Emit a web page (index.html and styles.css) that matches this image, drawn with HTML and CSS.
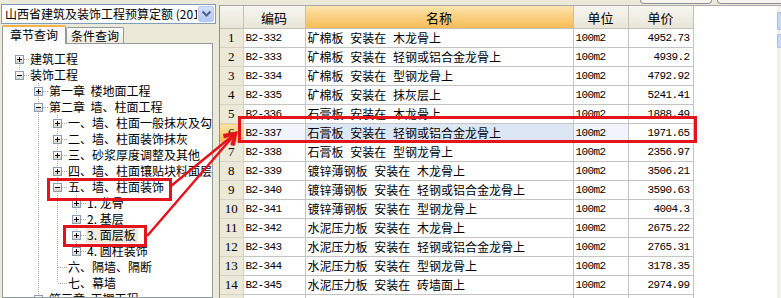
FILE: index.html
```html
<!DOCTYPE html>
<html lang="zh-CN">
<head>
    <meta charset="UTF-8">
    <title>定额查询</title>
    <link rel="stylesheet" href="styles.css">
</head>
<body>
    <div class="app">
        <div class="left">
            <div class="combo">
                <span class="combo-text">山西省建筑及装饰工程预算定额 (2011)</span>
                <span class="combo-btn">
                    <svg width="11" height="8" viewBox="0 0 11 8"><path d="M1.5 1.5 L5.5 5.5 L9.5 1.5" fill="none" stroke="#4d6185" stroke-width="2"/></svg>
                </span>
            </div>
            <div class="tabs">
                <div class="tab active">章节查询</div>
                <div class="tab">条件查询</div>
            </div>
            <div class="tree">
                <div class="row"><i class="c first"><b class="box plus"></b><s></s></i><span class="t">建筑工程</span></div>
                <div class="row"><i class="c last"><b class="box minus"></b><s></s></i><span class="t">装饰工程</span></div>
                <div class="row"><i class="g"></i><i class="c mid"><b class="box plus"></b><s></s></i><span class="t">第一章  楼地面工程</span></div>
                <div class="row"><i class="g"></i><i class="c mid"><b class="box minus"></b><s></s></i><span class="t">第二章  墙、柱面工程</span></div>
                <div class="row"><i class="g"></i><i class="g v"></i><i class="c mid"><b class="box plus"></b><s></s></i><span class="t">一、墙、柱面一般抹灰及勾缝</span></div>
                <div class="row"><i class="g"></i><i class="g v"></i><i class="c mid"><b class="box plus"></b><s></s></i><span class="t">二、墙、柱面装饰抹灰</span></div>
                <div class="row"><i class="g"></i><i class="g v"></i><i class="c mid"><b class="box plus"></b><s></s></i><span class="t">三、砂浆厚度调整及其他</span></div>
                <div class="row"><i class="g"></i><i class="g v"></i><i class="c mid"><b class="box plus"></b><s></s></i><span class="t">四、墙、柱面镶贴块料面层</span></div>
                <div class="row"><i class="g"></i><i class="g v"></i><i class="c mid"><b class="box minus"></b><s></s></i><span class="t">五、墙、柱面装饰</span></div>
                <div class="row"><i class="g"></i><i class="g v"></i><i class="g v"></i><i class="c mid"><b class="box plus"></b><s></s></i><span class="t">1. 龙骨</span></div>
                <div class="row"><i class="g"></i><i class="g v"></i><i class="g v"></i><i class="c mid"><b class="box plus"></b><s></s></i><span class="t">2. 基层</span></div>
                <div class="row"><i class="g"></i><i class="g v"></i><i class="g v"></i><i class="c mid"><b class="box plus"></b><s></s></i><span class="t selected">3. 面层板</span></div>
                <div class="row"><i class="g"></i><i class="g v"></i><i class="g v"></i><i class="c last"><b class="box plus"></b><s></s></i><span class="t">4. 圆柱装饰</span></div>
                <div class="row"><i class="g"></i><i class="g v"></i><i class="c mid nobox"><s></s></i><span class="t">六、隔墙、隔断</span></div>
                <div class="row"><i class="g"></i><i class="g v"></i><i class="c last nobox"><s></s></i><span class="t">七、幕墙</span></div>
                <div class="row"><i class="g"></i><i class="c mid"><b class="box plus"></b><s></s></i><span class="t">第三章  天棚工程</span></div>
            </div>
        </div>

        <div class="main">
            <div class="topbar">
                <span class="tool-btn"></span>
                <span class="tool-btn wide"></span>
            </div>
            <div class="gridbox">
                <div class="grid-area">
                    <table class="grid">
                        <colgroup>
                            <col class="w-num"><col class="w-code"><col class="w-name"><col class="w-unit"><col class="w-price">
                        </colgroup>
                        <thead>
                            <tr><th></th><th>编码</th><th class="sorted">名称</th><th>单位</th><th>单价</th></tr>
                        </thead>
                        <tbody>
                            <tr><td class="num">1</td><td class="code">B2-332</td><td class="name">矿棉板 安装在 木龙骨上</td><td class="code">100m2</td><td class="price">4952.73</td></tr>
                            <tr><td class="num">2</td><td class="code">B2-333</td><td class="name">矿棉板 安装在 轻钢或铝合金龙骨上</td><td class="code">100m2</td><td class="price">4939.2</td></tr>
                            <tr><td class="num">3</td><td class="code">B2-334</td><td class="name">矿棉板 安装在 型钢龙骨上</td><td class="code">100m2</td><td class="price">4792.92</td></tr>
                            <tr><td class="num">4</td><td class="code">B2-335</td><td class="name">矿棉板 安装在 抹灰层上</td><td class="code">100m2</td><td class="price">5241.41</td></tr>
                            <tr><td class="num">5</td><td class="code">B2-336</td><td class="name">石膏板 安装在 木龙骨上</td><td class="code">100m2</td><td class="price">1888.49</td></tr>
                            <tr class="current"><td class="num">6</td><td class="code">B2-337</td><td class="name">石膏板 安装在 轻钢或铝合金龙骨上</td><td class="code">100m2</td><td class="price">1971.65</td></tr>
                            <tr><td class="num">7</td><td class="code">B2-338</td><td class="name">石膏板 安装在 型钢龙骨上</td><td class="code">100m2</td><td class="price">2356.97</td></tr>
                            <tr><td class="num">8</td><td class="code">B2-339</td><td class="name">镀锌薄钢板 安装在 木龙骨上</td><td class="code">100m2</td><td class="price">3506.21</td></tr>
                            <tr><td class="num">9</td><td class="code">B2-340</td><td class="name">镀锌薄钢板 安装在 轻钢或铝合金龙骨上</td><td class="code">100m2</td><td class="price">3590.63</td></tr>
                            <tr><td class="num">10</td><td class="code">B2-341</td><td class="name">镀锌薄钢板 安装在 型钢龙骨上</td><td class="code">100m2</td><td class="price">4004.3</td></tr>
                            <tr><td class="num">11</td><td class="code">B2-342</td><td class="name">水泥压力板 安装在 木龙骨上</td><td class="code">100m2</td><td class="price">2675.22</td></tr>
                            <tr><td class="num">12</td><td class="code">B2-343</td><td class="name">水泥压力板 安装在 轻钢或铝合金龙骨上</td><td class="code">100m2</td><td class="price">2765.31</td></tr>
                            <tr><td class="num">13</td><td class="code">B2-344</td><td class="name">水泥压力板 安装在 型钢龙骨上</td><td class="code">100m2</td><td class="price">3178.35</td></tr>
                            <tr><td class="num">14</td><td class="code">B2-345</td><td class="name">水泥压力板 安装在 砖墙面上</td><td class="code">100m2</td><td class="price">2974.99</td></tr>
                            <tr><td class="num">15</td><td class="code">B2-346</td><td class="name">水泥压力板 安装在 混凝土墙面上</td><td class="code">100m2</td><td class="price">2892.16</td></tr>
                        </tbody>
                    </table>
                </div>
                <div class="vscroll">
                    <span class="sb-btn"></span>
                    <span class="sb-thumb"></span>
                </div>
            </div>
        </div>

        <!-- red annotations drawn over the screenshot -->
        <svg class="marks" width="781" height="298" viewBox="0 0 781 298">
            <g fill="none" stroke="#e3141c" stroke-width="3">
                <rect x="239.5" y="117.5" width="456" height="24"/>
                <rect x="48.5" y="179.5" width="122" height="20"/>
                <rect x="64.5" y="226.5" width="81" height="19"/>
            </g>
            <g fill="none" stroke="#e3141c" stroke-width="2.5" stroke-linecap="round">
                <path d="M171 186 L236 133 M224.2 134.9 L236 133 L231.7 144.2"/>
                <path d="M148 235 L236 133 M224.7 137 L236 133 L233.7 144.8"/>
            </g>
        </svg>
    </div>
</body>
</html>
```

FILE: styles.css
```css
body {
    margin: 0;
    font-family: "Noto Sans CJK SC", "Liberation Sans", sans-serif;
    font-size: 12px;
    color: #000;
    background: #ece9d8;
}
.app {
    position: relative;
    display: flex;
    width: 781px;
    height: 298px;
    overflow: hidden;
    background: #ece9d8;
}

/* left panel */
.left {
    width: 216px;
    flex: none;
    padding: 4px 0 0 1px;
    box-sizing: border-box;
    display: flex;
    flex-direction: column;
}
.combo {
    display: flex;
    height: 20px;
    box-sizing: border-box;
    border: 1px solid #7f9db9;
    background: #fff;
}
.combo-text {
    flex: 1;
    overflow: hidden;
    white-space: nowrap;
    padding-left: 3px;
    line-height: 18px;
}
.combo-btn {
    width: 16px;
    margin: 1px;
    box-sizing: border-box;
    border: 1px solid #b9c9ef;
    border-radius: 2px;
    background: linear-gradient(#d3defa, #b6c8f6);
    display: flex;
    align-items: center;
    justify-content: center;
}
.tabs {
    display: flex;
    align-items: flex-end;
    height: 20px;
    margin-bottom: -1px;
    padding-left: 1px;
}
.tab {
    height: 16px;
    line-height: 16px;
    padding: 0 4px;
    border: 1px solid #919b9c;
    border-bottom: none;
    border-radius: 2px 2px 0 0;
    background: linear-gradient(#fefefe, #ece9df);
    font-size: 12px;
}
.tab.active {
    position: relative;
    z-index: 1;
    height: 17px;
    padding: 0 7px;
    border-top: 2px solid #f4b24b;
    background: #fcfcfe;
}
.tree {
    flex: 1;
    margin-left: 1px;
    width: 211px;
    box-sizing: border-box;
    border: 1px solid #919b9c;
    background: #fff;
    padding: 7px 0 0 7px;
    overflow: hidden;
}
.row {
    display: flex;
    align-items: center;
    height: 16px;
    white-space: pre;
}
.g, .c {
    flex: none;
    width: 19px;
    height: 16px;
    display: flex;
    align-items: center;
    background-image: repeating-linear-gradient(to bottom, #a4a4a4 0 1px, transparent 1px 2px);
    background-repeat: no-repeat;
    background-position: 9px 0;
    background-size: 0 0;
}
.g.v, .c.mid {
    background-size: 1px 16px;
}
.c.last {
    background-size: 1px 8px;
}
.c.first {
    background-position: 9px 8px;
    background-size: 1px 8px;
}
.c s {
    flex: 1;
    height: 1px;
    background: repeating-linear-gradient(to right, #a4a4a4 0 1px, transparent 1px 2px);
}
.c.nobox s {
    margin-left: 10px;
}
.box {
    flex: none;
    width: 9px;
    height: 9px;
    margin-left: 5px;
    box-sizing: border-box;
    border: 1px solid #8a9cb2;
    background: linear-gradient(#fff, #d6d2c6);
}
.box.plus {
    background:
        linear-gradient(#000, #000) center / 5px 1px no-repeat,
        linear-gradient(#000, #000) center / 1px 5px no-repeat,
        linear-gradient(#fff, #d6d2c6);
}
.box.minus {
    background:
        linear-gradient(#000, #000) center / 5px 1px no-repeat,
        linear-gradient(#fff, #d6d2c6);
}
.t {
    padding: 0 2px 0 1px;
    line-height: 16px;
}
.t.selected {
    background: #efeadb;
}

/* right panel */
.main {
    flex: 1;
    margin-left: 3px;
    display: flex;
    flex-direction: column;
    min-width: 0;
}
.topbar {
    height: 5px;
    display: flex;
    justify-content: flex-end;
    gap: 5px;
    margin-right: -6px;
    overflow: hidden;
}
.tool-btn {
    width: 72px;
    height: 4px;
    box-sizing: border-box;
    border: 1px solid #8c8f9a;
    border-top: none;
    border-radius: 0 0 4px 4px;
    background: #f5f4ef;
}
.tool-btn.wide {
    width: 70px;
}
.gridbox {
    flex: 1;
    display: flex;
    border-top: 1px solid #a8aaa8;
    border-left: 1px solid #8f9198;
    min-height: 0;
}
.grid-area {
    flex: 1;
    background: #fff;
    overflow: hidden;
}
.grid {
    border-collapse: collapse;
    table-layout: fixed;
    width: 473px;
}
.w-num { width: 23px; }
.w-code { width: 62px; }
.w-name { width: 268px; }
.w-unit { width: 55px; }
.w-price { width: 65px; }
.grid th {
    height: 20px;
    font-weight: normal;
    font-size: 13px;
    border: 1px solid #c4c2b8;
    border-top: none;
    background: linear-gradient(#f7f6f0, #e8e5d8);
}
.grid th:first-child {
    border-left: none;
}
.grid th.sorted {
    background: linear-gradient(#fde4ad, #f6bb55);
}
.grid td {
    height: 18px;
    padding: 0 3px 0 2px;
    border: 1px solid #c4c4c4;
    white-space: nowrap;
    overflow: hidden;
    line-height: 18px;
}
.grid td.num {
    border-left: none;
    padding: 0;
    text-align: center;
    background: #ece9d8;
    border-color: #d6d3c6;
    font-family: "Liberation Serif", serif;
    font-size: 13px;
}
.grid td.code, .grid td.price {
    font-family: "Liberation Mono", monospace;
    font-size: 11px;
    letter-spacing: -0.6px;
}
.grid td.price {
    text-align: right;
}
.grid td.name {
    word-spacing: 4px;
}
.grid tr.current td.num {
    background: linear-gradient(#fde4ad, #f6bb55);
}
.grid tr.current td.code {
    background: #f1f5fb;
}
.grid tr.current td.name {
    background: #dce6f4;
}
.vscroll {
    width: 4px;
    padding-top: 6px;
    background: #f2f1ec;
    display: flex;
    flex-direction: column;
    gap: 4px;
}
.sb-btn, .sb-thumb {
    height: 16px;
    border-radius: 2px 0 0 2px;
    background: #c8d6f8;
    border: 1px solid #a9bbe6;
    border-right: none;
}
.sb-thumb {
    height: 12px;
}

.marks {
    position: absolute;
    left: 0;
    top: 0;
    pointer-events: none;
}
```
